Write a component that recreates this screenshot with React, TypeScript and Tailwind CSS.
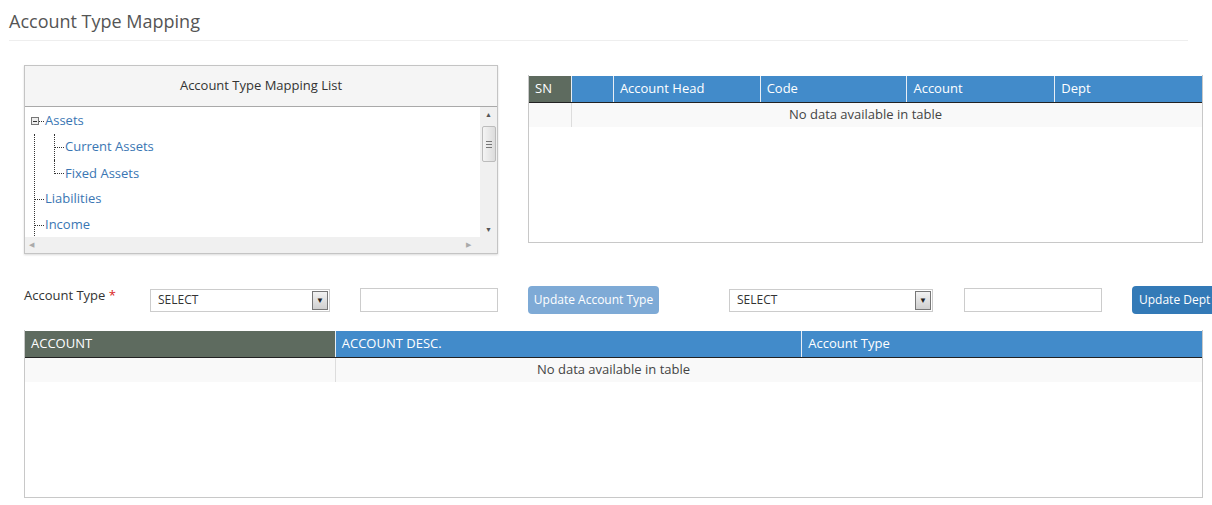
const font = { fontFamily: '"Open Sans", "Liberation Sans", sans-serif' };

const Stub = ({ w }: { w: number }) => (
  <span className="inline-block border-t border-dotted border-[#333]" style={{ width: w }} />
);

const TreePanel = () => (
  <div className="w-[474px] border border-[#c4c4c4] bg-white shadow-[0_1px_2px_rgba(0,0,0,0.15)]">
    <div className="flex h-[41px] items-center justify-center border-b border-[#a9a9a9] bg-[#f5f5f5] text-[13px] text-[#333]">
      Account Type Mapping List
    </div>
    <div className="flex h-[130px]">
      <div className="flex-1 overflow-hidden pt-px pl-[6px] text-[13px] text-[#3a76b3]">
        <div className="flex h-[26px] items-center">
          <span className="flex h-[8px] w-[8px] items-center justify-center border border-[#777] bg-[#eee]">
            <span className="h-px w-[4px] bg-[#333]" />
          </span>
          <Stub w={5} />
          <span className="ml-px">Assets</span>
        </div>
        <div className="ml-[3px] border-l border-dotted border-[#333]">
          <div className="ml-[19px] border-l border-dotted border-[#333]">
            <div className="flex h-[26px] items-center">
              <Stub w={9} />
              <span className="ml-px">Current Assets</span>
            </div>
          </div>
          <div className="ml-[19px] flex h-[26px] items-start">
            <span className="h-[14px] border-l border-dotted border-[#333]" />
            <span className="mt-[13px] inline-block w-[9px] border-t border-dotted border-[#333]" />
            <span className="ml-px mt-[4px]">Fixed Assets</span>
          </div>
          <div className="flex h-[26px] items-center">
            <Stub w={9} />
            <span className="ml-px">Liabilities</span>
          </div>
          <div className="flex h-[26px] items-center">
            <Stub w={9} />
            <span className="ml-px">Income</span>
          </div>
        </div>
      </div>
      <div className="flex w-[17px] flex-col items-center bg-[#f0f0f0]">
        <span className="mt-[4px] text-[7px] leading-none text-[#555]">▲</span>
        <div className="mt-[8px] flex h-[36px] w-[14px] flex-col items-center justify-center gap-[2px] rounded-[2px] border border-[#bcbcbc] bg-gradient-to-r from-[#f4f4f4] to-[#dcdcdc]">
          <span className="h-px w-[6px] bg-[#777]" />
          <span className="h-px w-[6px] bg-[#777]" />
          <span className="h-px w-[6px] bg-[#777]" />
        </div>
        <span className="mt-auto mb-[4px] text-[7px] leading-none text-[#555]">▼</span>
      </div>
    </div>
    <div className="flex h-[16px] items-center bg-[#f0f0f0] pl-[4px] pr-[26px] text-[7px] text-[#aaa]">
      <span>◀</span>
      <span className="ml-auto">▶</span>
    </div>
  </div>
);

type Col = { label: string; w: number; dark?: boolean };

const DataTable = ({ cols, firstW, height }: { cols: Col[]; firstW: number; height: number }) => (
  <div className="border-x border-b border-[#c8c8c8] bg-white" style={{ height }}>
    <div className="flex h-[28px] border-b border-[#222] pt-px text-[13px] text-white">
      {cols.map((c, i) => (
        <div
          key={i}
          className={`flex items-center border-r border-[#e8eef5] pl-[6px] last:border-r-0 ${
            c.dark ? 'bg-[#5e6b5f]' : 'bg-[#428bca]'
          }`}
          style={{ width: c.w, flexGrow: i === cols.length - 1 ? 1 : 0 }}
        >
          {c.label}
        </div>
      ))}
    </div>
    <div className="relative flex h-[24px] items-center justify-center bg-[#f9f9f9] text-[13px] text-[#444]">
      <div className="absolute left-0 top-0 h-full border-r border-[#ddd]" style={{ width: firstW }} />
      <span className="relative">No data available in table</span>
    </div>
  </div>
);

const Select = ({ w }: { w: number }) => (
  <div
    className="flex h-[23px] shrink-0 items-center border border-[#ccc] bg-white pl-[7px] pr-px text-[12px] text-[#333]"
    style={{ width: w }}
  >
    <span className="flex-1">SELECT</span>
    <span className="flex h-[19px] w-[16px] items-center justify-center border border-[#777] bg-gradient-to-b from-[#f2f2f2] to-[#cfcfcf] text-[8px] text-[#222]">
      ▼
    </span>
  </div>
);

export default function App() {
  return (
    <div className="h-[505px] w-[1212px] overflow-hidden bg-white" style={font}>
      <div className="mr-[24px] ml-[9px] border-b border-[#eee] pt-[9px] pb-[7px]">
        <h1 className="text-[18px] leading-[24px] text-[#555]">Account Type Mapping</h1>
      </div>

      <div className="mt-[24px] flex items-start">
        <div className="ml-[24px]">
          <TreePanel />
        </div>
        <div className="mt-[10px] ml-[30px] w-[675px]">
          <DataTable
            firstW={43}
            height={168}
            cols={[
              { label: 'SN', w: 43, dark: true },
              { label: '', w: 42 },
              { label: 'Account Head', w: 147 },
              { label: 'Code', w: 147 },
              { label: 'Account', w: 148 },
              { label: 'Dept', w: 147 },
            ]}
          />
        </div>
      </div>

      <div className="mt-[32px] flex items-center text-[13px] text-[#333]">
        <div className="ml-[24px] w-[126px] shrink-0 self-start">
          Account Type <span className="text-[#d9251d]">*</span>
        </div>
        <Select w={180} />
        <div className="ml-[30px] h-[24px] w-[138px] shrink-0 border border-[#ccc] bg-white" />
        <button className="ml-[30px] h-[28px] w-[131px] shrink-0 rounded-[4px] bg-[#7eaad6] text-[12px] text-white">
          Update Account Type
        </button>
        <div className="ml-[70px] shrink-0">
          <Select w={204} />
        </div>
        <div className="ml-[31px] h-[24px] w-[138px] shrink-0 border border-[#ccc] bg-white" />
        <button className="ml-[30px] h-[28px] w-[90px] shrink-0 rounded-[4px] bg-[#337ab7] pl-[7px] text-left text-[12px] text-white">
          Update Dept
        </button>
      </div>

      <div className="mt-[16px] ml-[24px] w-[1179px]">
        <DataTable
          firstW={311}
          height={168}
          cols={[
            { label: 'ACCOUNT', w: 311, dark: true },
            { label: 'ACCOUNT DESC.', w: 467 },
            { label: 'Account Type', w: 400 },
          ]}
        />
      </div>
    </div>
  );
}
